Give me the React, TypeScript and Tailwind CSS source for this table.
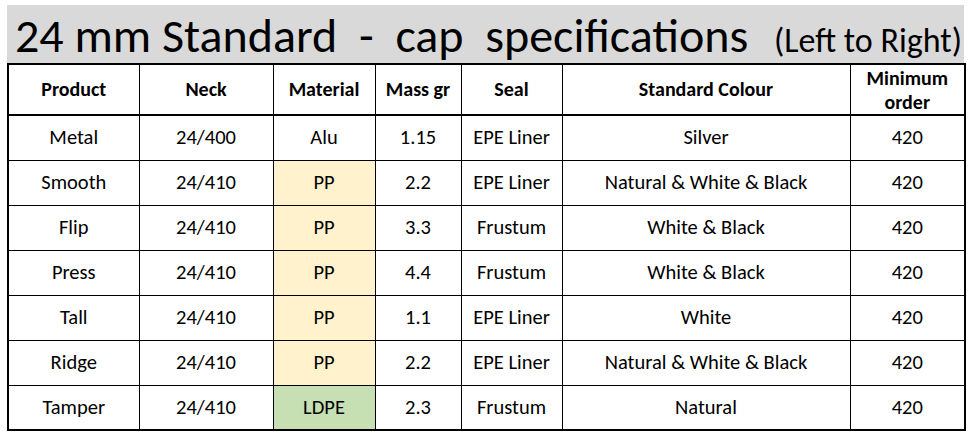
const rows = [
  { product: 'Metal', neck: '24/400', material: 'Alu', mass: '1.15', seal: 'EPE Liner', colour: 'Silver', order: '420', tint: '' },
  { product: 'Smooth', neck: '24/410', material: 'PP', mass: '2.2', seal: 'EPE Liner', colour: 'Natural & White & Black', order: '420', tint: 'bg-[#fff2cc]' },
  { product: 'Flip', neck: '24/410', material: 'PP', mass: '3.3', seal: 'Frustum', colour: 'White & Black', order: '420', tint: 'bg-[#fff2cc]' },
  { product: 'Press', neck: '24/410', material: 'PP', mass: '4.4', seal: 'Frustum', colour: 'White & Black', order: '420', tint: 'bg-[#fff2cc]' },
  { product: 'Tall', neck: '24/410', material: 'PP', mass: '1.1', seal: 'EPE Liner', colour: 'White', order: '420', tint: 'bg-[#fff2cc]' },
  { product: 'Ridge', neck: '24/410', material: 'PP', mass: '2.2', seal: 'EPE Liner', colour: 'Natural & White & Black', order: '420', tint: 'bg-[#fff2cc]' },
  { product: 'Tamper', neck: '24/410', material: 'LDPE', mass: '2.3', seal: 'Frustum', colour: 'Natural', order: '420', tint: 'bg-[#c6e0b4]' },
];

const font = 'font-[Carlito,Calibri,Lato,sans-serif]';

export default function App() {
  return (
    <div className={`bg-white w-[968px] h-[434px] pl-[7px] pt-[5px] text-black ${font}`}>
      <div className="w-[957px]">
        <div className="flex items-baseline justify-between bg-[#d9d9d9] h-[58px] pl-[8px] pr-[2px] pt-[3px]">
          <span className="text-[48px] leading-[55px] whitespace-pre">24 mm Standard  -  cap  specifications</span>
          <span className="text-[34px] leading-[55px] whitespace-pre">(Left to Right)</span>
        </div>
        <table className="w-[957px] table-fixed border-collapse border-2 border-black text-[20.5px]">
          <colgroup>
            <col className="w-[131px]" />
            <col className="w-[134px]" />
            <col className="w-[102px]" />
            <col className="w-[86px]" />
            <col className="w-[101px]" />
            <col className="w-[288px]" />
            <col className="w-[115px]" />
          </colgroup>
          <thead>
            <tr className="h-[51px] border-b-2 border-black font-bold text-[20px] leading-[27px]">
              <th className="border border-black">Product</th>
              <th className="border border-black">Neck</th>
              <th className="border border-black">Material</th>
              <th className="border border-black">Mass gr</th>
              <th className="border border-black">Seal</th>
              <th className="border border-black">Standard Colour</th>
              <th className="border border-black leading-[24px]">
                Minimum
                <br />
                order
              </th>
            </tr>
          </thead>
          <tbody>
            {rows.map((row) => (
              <tr key={row.product} className="h-[45px] text-center">
                <td className="border border-black">{row.product}</td>
                <td className="border border-black">{row.neck}</td>
                <td className={`border border-black ${row.tint}`}>{row.material}</td>
                <td className="border border-black">{row.mass}</td>
                <td className="border border-black">{row.seal}</td>
                <td className="border border-black">{row.colour}</td>
                <td className="border border-black">{row.order}</td>
              </tr>
            ))}
          </tbody>
        </table>
      </div>
    </div>
  );
}
